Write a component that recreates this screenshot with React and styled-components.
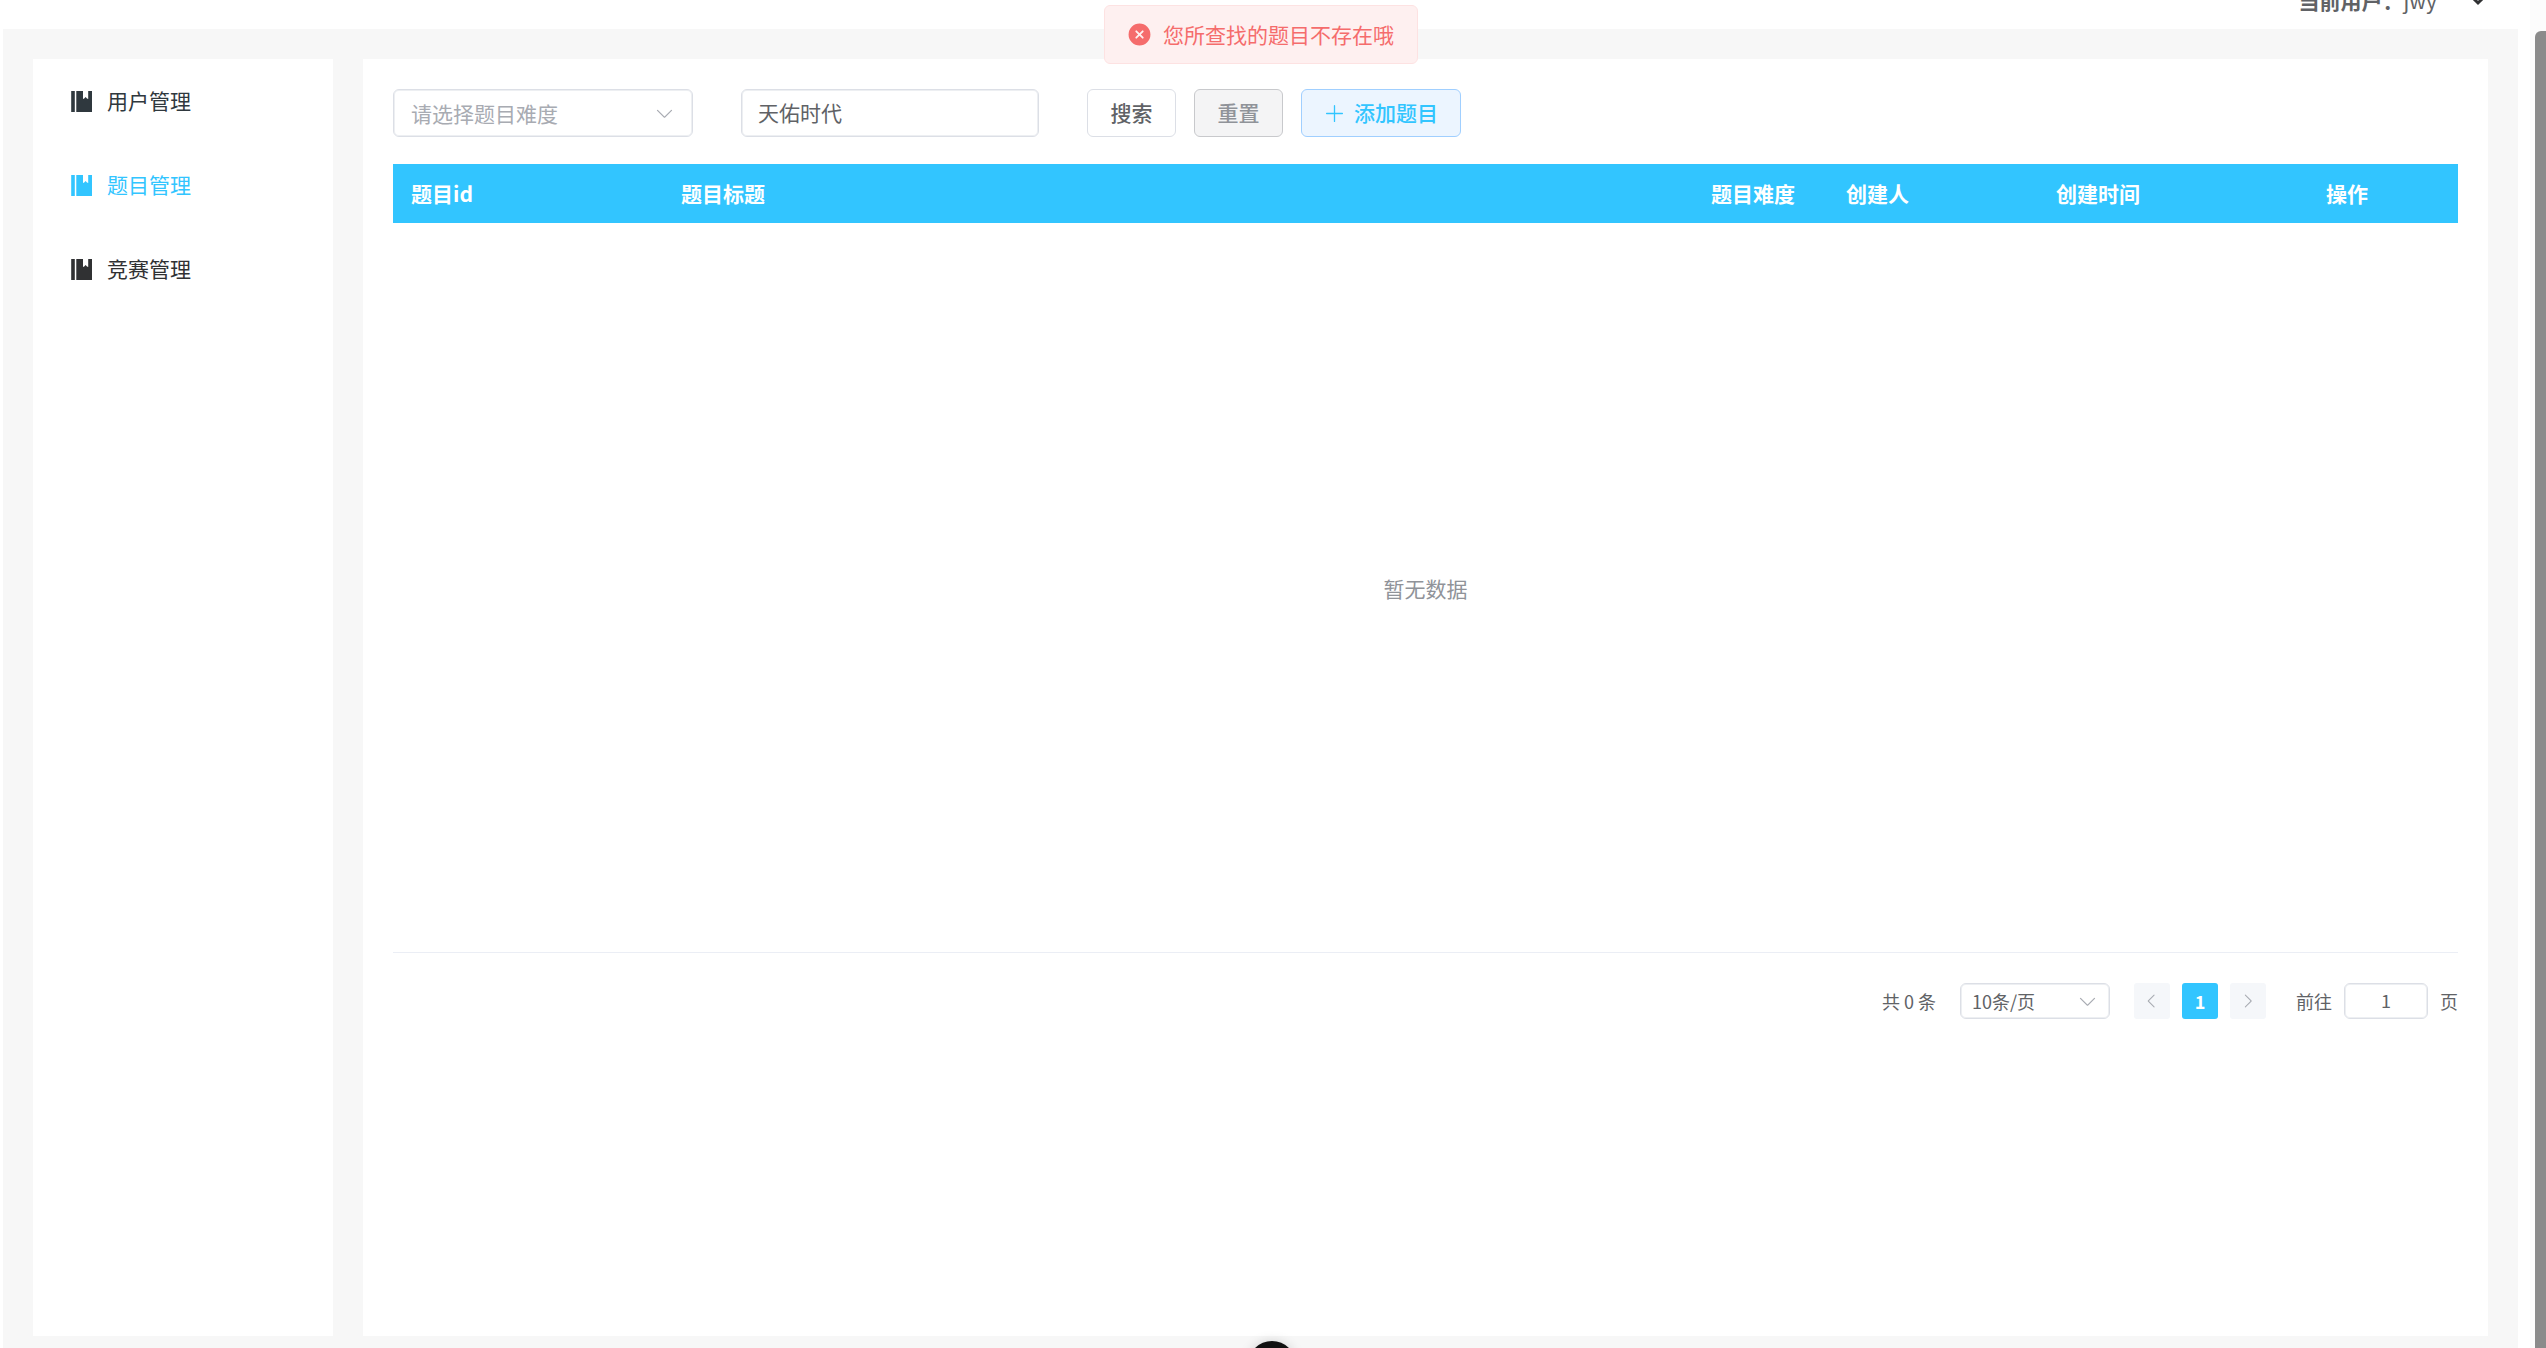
import React, { useState } from 'react';
import styled, { createGlobalStyle } from 'styled-components';

const GlobalStyle = createGlobalStyle`
  * {
    box-sizing: border-box;
  }
  body {
    margin: 0;
    background: #fff;
    color: #606266;
    font-family: 'Noto Sans CJK SC', sans-serif;
    font-size: 21px;
    line-height: 30px;
  }
  button,
  input,
  select {
    font: inherit;
  }
`;

const ICONS = {
  plus: 'M480 480V128a32 32 0 0 1 64 0v352h352a32 32 0 1 1 0 64H544v352a32 32 0 1 1-64 0V544H128a32 32 0 0 1 0-64h352z',
  down: 'M831.872 340.864 512 652.672 192.128 340.864a30.592 30.592 0 0 0-42.752 0 29.12 29.12 0 0 0 0 41.6L489.664 714.24a32 32 0 0 0 44.672 0l340.288-331.712a29.12 29.12 0 0 0 0-41.728 30.592 30.592 0 0 0-42.752 0z',
  left: 'M609.408 149.376 277.76 489.6a32 32 0 0 0 0 44.672l331.648 340.352a29.12 29.12 0 0 0 41.728 0 30.592 30.592 0 0 0 0-42.752L339.264 511.936l311.872-319.872a30.592 30.592 0 0 0 0-42.688 29.12 29.12 0 0 0-41.728 0z',
  right:
    'M340.864 149.312a30.592 30.592 0 0 0 0 42.752L652.736 512 340.864 831.872a30.592 30.592 0 0 0 0 42.752 29.12 29.12 0 0 0 41.728 0L714.24 534.336a32 32 0 0 0 0-44.672L382.592 149.376a29.12 29.12 0 0 0-41.728 0z',
  error:
    'M512 64a448 448 0 1 1 0 896 448 448 0 0 1 0-896zm0 393.664L407.936 353.6a38.4 38.4 0 1 0-54.336 54.336L457.664 512 353.6 616.064a38.4 38.4 0 1 0 54.336 54.336L512 566.336 616.064 670.4a38.4 38.4 0 1 0 54.336-54.336L566.336 512 670.4 407.936a38.4 38.4 0 1 0-54.336-54.336L512 457.664z',
};

const Icon = ({ name, size = 21 }) => (
  <svg width={size} height={size} viewBox="0 0 1024 1024" fill="currentColor" aria-hidden="true">
    <path d={ICONS[name]} />
  </svg>
);

const BookIcon = () => (
  <svg width="21" height="21" viewBox="0 0 21 21" fill="currentColor" aria-hidden="true">
    <path d="M0.2 0h3.6v21H0.2zM5.3 0H12v8l1.2-.5 1.4-1.4 1.4 1.4 1.2.5V0H21v21H5.3z" />
  </svg>
);

const menu = [
  { label: '用户管理', color: '#2f383e' },
  { label: '题目管理', color: '#32c5ff' },
  { label: '竞赛管理', color: '#303133' },
];

const columns = [
  { title: '题目id', width: '270px' },
  { title: '题目标题', width: 'auto' },
  { title: '题目难度', width: '135px' },
  { title: '创建人', width: '210px' },
  { title: '创建时间', width: '270px' },
  { title: '操作', width: '150px' },
];

export default function App() {
  const [title, setTitle] = useState('天佑时代');
  const [page, setPage] = useState('1');

  return (
    <>
      <GlobalStyle />
      <Page>
        <Header>
          <strong>当前用户：</strong>
          <UserName>jwy</UserName>
          <MenuButton type="button" aria-label="用户菜单">
            <svg width="18" height="18" viewBox="0 0 18 18" fill="none" stroke="currentColor" strokeWidth="3">
              <path d="M3 6l6 6 6-6" />
            </svg>
          </MenuButton>
        </Header>
        <Content>
          <Sidebar>
            {menu.map(({ label, color }) => (
              <MenuItem key={label} href="#" $color={color}>
                <BookIcon />
                <Label>{label}</Label>
              </MenuItem>
            ))}
          </Sidebar>
          <Main>
            <Toolbar>
              <SelectBox $width="300px">
                <Select aria-label="题目难度" defaultValue="" $placeholder>
                  <option value="">请选择题目难度</option>
                </Select>
                <Icon name="down" />
              </SelectBox>
              <TitleInput
                aria-label="题目标题"
                value={title}
                onChange={(e) => setTitle(e.target.value)}
              />
              <Buttons>
                <Button type="button">
                  <Label>搜索</Label>
                </Button>
                <Button type="button" $kind="info">
                  <Label>重置</Label>
                </Button>
                <Button type="button" $kind="primary">
                  <Icon name="plus" />
                  <Label>添加题目</Label>
                </Button>
              </Buttons>
            </Toolbar>
            <Table>
              <thead>
                <tr>
                  {columns.map(({ title, width }) => (
                    <HeadCell key={title} $width={width}>
                      {title}
                    </HeadCell>
                  ))}
                </tr>
              </thead>
              <tbody>
                <tr>
                  <EmptyCell colSpan={columns.length}>暂无数据</EmptyCell>
                </tr>
              </tbody>
            </Table>
            <Pagination>
              <span>共 0 条</span>
              <SelectBox $width="150px" $small>
                <Select aria-label="每页条数" $small>
                  <option>10条/页</option>
                </Select>
                <Icon name="down" />
              </SelectBox>
              <Pager>
                <PageButton type="button" aria-label="上一页" disabled>
                  <Icon name="left" size={18} />
                </PageButton>
                <PageButton type="button" $active>
                  1
                </PageButton>
                <PageButton type="button" aria-label="下一页" disabled>
                  <Icon name="right" size={18} />
                </PageButton>
              </Pager>
              <Jumper>
                前往
                <PageInput value={page} onChange={(e) => setPage(e.target.value)} />页
              </Jumper>
            </Pagination>
          </Main>
        </Content>
      </Page>
      <Message role="alert">
        <Icon name="error" size={25} />
        <Label>您所查找的题目不存在哦</Label>
      </Message>
      <FloatingBall />
      <ScrollTrack>
        <ScrollThumb />
      </ScrollTrack>
    </>
  );
}

const Page = styled.div`
  display: flex;
  flex-direction: column;
  height: 100vh;
  padding: 0 28px 0 3px;
  overflow: hidden;
`;

const Header = styled.header`
  display: flex;
  flex-shrink: 0;
  align-items: center;
  justify-content: flex-end;
  height: 58px;
  margin-top: -29px;
  padding-right: 31px;
`;

const UserName = styled.span`
  margin-right: 32px;
`;

const MenuButton = styled.button`
  display: flex;
  padding: 0;
  border: 0;
  background: none;
  color: #303133;
`;

const Content = styled.div`
  display: flex;
  flex: 1;
  gap: 30px;
  padding: 30px 30px 12px;
  background: #f7f7f7;
`;

const Sidebar = styled.nav`
  flex-shrink: 0;
  width: 300px;
  background: #fff;
`;

/* lifts text that stands beside an icon to its optical centre */
const Label = styled.span`
  padding-bottom: 2px;
`;

const MenuItem = styled.a`
  display: flex;
  align-items: center;
  gap: 15px;
  height: 84px;
  padding-left: 38px;
  color: ${({ $color }) => $color};
  text-decoration: none;

  ${Label} {
    display: block;
  }
`;

const Main = styled.main`
  flex: 1;
  min-width: 0;
  padding: 30px;
  background: #fff;
`;

const Toolbar = styled.div`
  display: flex;
  gap: 48px;
  margin-bottom: 27px;
`;

const SelectBox = styled.div`
  display: grid;
  align-items: center;
  width: ${({ $width }) => $width};
  color: #a8abb2;

  > * {
    grid-area: 1 / 1;
  }
  svg {
    justify-self: end;
    margin-right: ${({ $small }) => ($small ? '12px' : '18px')};
    pointer-events: none;
  }
`;

const Select = styled.select`
  width: 100%;
  height: ${({ $small }) => ($small ? '36px' : '48px')};
  padding: ${({ $small }) => ($small ? '0 11px' : '0 17px')};
  border: 1px solid #dcdfe6;
  border-radius: 6px;
  box-shadow: inset 0 0 0 1px #edeff2;
  appearance: none;
  background: #fff;
  color: ${({ $placeholder }) => ($placeholder ? '#a8abb2' : '#606266')};
  font-size: ${({ $small }) => ($small ? '18px' : '21px')};
`;

const TitleInput = styled.input`
  width: 298px;
  height: 48px;
  padding: 0 16px 2px;
  border: 1px solid #dcdfe6;
  border-radius: 6px;
  box-shadow: inset 0 0 0 1px #edeff2;
  color: #606266;
`;

const Buttons = styled.div`
  display: flex;
  gap: 18px;
`;

const kinds = {
  default: 'background: #fff; border-color: #dcdfe6; color: #606266;',
  info: 'background: #f4f4f5; border-color: #c8c9cc; color: #909399;',
  primary: 'background: #ecf5ff; border-color: #a0cfff; color: #32c5ff;',
};

const Button = styled.button`
  display: flex;
  align-items: center;
  justify-content: center;
  gap: 9px;
  min-width: 89px;
  height: 48px;
  padding: 0 22px;
  border: 1px solid;
  border-radius: 6px;
  font-weight: 500;
  white-space: nowrap;
  ${({ $kind = 'default' }) => kinds[$kind]}
`;

const Table = styled.table`
  width: 100%;
  table-layout: fixed;
  border-collapse: separate;
  border-spacing: 0;
`;

const HeadCell = styled.th`
  width: ${({ $width }) => $width};
  height: 59px;
  padding: 0 18px 2px;
  background: #32c5ff;
  color: #fff;
  font-weight: 700;
  text-align: left;
`;

const EmptyCell = styled.td`
  height: 730px;
  padding: 0;
  border-bottom: 1px solid #ebeef5;
  color: #909399;
  text-align: center;
`;

const Pagination = styled.div`
  display: flex;
  align-items: center;
  justify-content: flex-end;
  gap: 24px;
  margin-top: 30px;
  font-size: 18px;
`;

const Pager = styled.div`
  display: flex;
  gap: 12px;
  margin-right: 6px;
`;

const PageButton = styled.button`
  display: flex;
  align-items: center;
  justify-content: center;
  width: 36px;
  height: 36px;
  padding: 0;
  border: 0;
  border-radius: 3px;
  background: ${({ $active }) => ($active ? '#32c5ff' : '#f5f7fa')};
  color: ${({ $active }) => ($active ? '#fff' : '#a8abb2')};
  font-weight: 700;
`;

const Jumper = styled.label`
  display: flex;
  align-items: center;
  gap: 12px;
`;

const PageInput = styled.input`
  width: 84px;
  height: 36px;
  padding: 0 11px 2px;
  border: 1px solid #dcdfe6;
  border-radius: 6px;
  box-shadow: inset 0 0 0 1px #edeff2;
  color: #606266;
  text-align: center;
`;

const Message = styled.div`
  position: fixed;
  top: 5px;
  left: calc(50% - 12px);
  display: flex;
  align-items: center;
  gap: 11px;
  height: 59px;
  padding: 0 23px 0 22px;
  border: 1px solid #fde2e2;
  border-radius: 6px;
  background: #fef0f0;
  color: #f56c6c;
  white-space: nowrap;
  transform: translateX(-50%);
`;

const FloatingBall = styled.div`
  position: fixed;
  bottom: -41px;
  left: calc(50% - 25px);
  width: 48px;
  height: 48px;
  border-radius: 50%;
  background: #111;
  box-shadow: 0 0 12px rgba(0, 0, 0, 0.15);
`;

const ScrollTrack = styled.div`
  position: fixed;
  top: 0;
  right: 0;
  bottom: 0;
  width: 16px;
  padding: 31px 0 0 5px;
  background: #fcfcfc;
`;

const ScrollThumb = styled.div`
  height: 100%;
  border-radius: 6px 0 0 0;
  background: #8b8b8b;
`;
